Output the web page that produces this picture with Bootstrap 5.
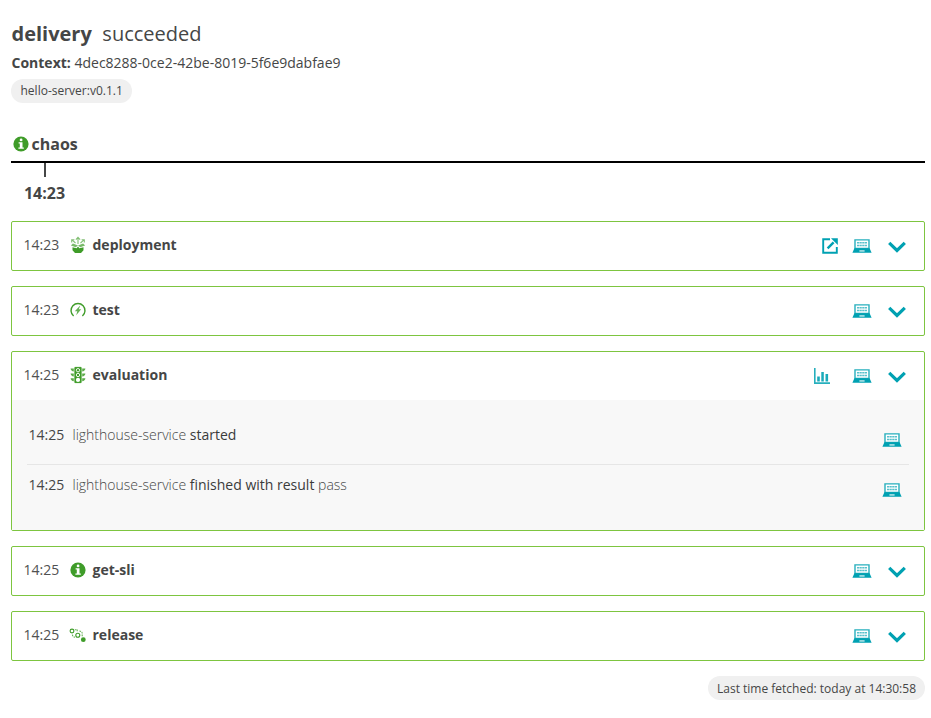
<!DOCTYPE html>
<html lang="en">
<head>
<meta charset="utf-8">
<title>delivery succeeded</title>
<meta name="viewport" content="width=device-width, initial-scale=1">
<link href="https://cdn.jsdelivr.net/npm/bootstrap@5.3.0/dist/css/bootstrap.min.css" rel="stylesheet">
<style>
body{font-family:"Open Sans",sans-serif;font-size:14px;line-height:20px;color:#454646;background:#fff}
.page{padding:20px 6px 0 11px}
.title{font-size:20px;line-height:28px;gap:10.5px;padding-left:.5px}
.context{line-height:20px;margin-top:5px;padding-left:.5px}
.chip{font-size:12px;line-height:24px;height:24px;padding:0 9px;border-radius:12px;background:#f0f0f0}
.chip-service{margin-top:6px;padding:0 9.5px}
.stage{margin-top:30px;height:30px;padding:0 0 0 2px;border-bottom:2px solid #000;font-size:16px;line-height:22px;gap:2.5px}
.stage svg{margin-top:3px}
.mark-time{width:67px;font-size:16px;line-height:22px}
.tick{width:2px;height:14px;background:#454646;margin-bottom:5px}
.tiles{gap:15px;margin-top:17px}
.tile{border:1px solid #7dc540;border-radius:2px}
.tile-head{height:48px;padding:0 18px 2px 11.5px}
.tile-head .clock{width:45.5px;color:#505151}
.tile-head .kind{width:18px;height:18px;margin-right:5.5px}
.actions{color:#00a1b2;padding-top:2px}
.actions .chev{margin-left:16px;margin-top:2px}
.actions .ext{margin-right:14px}
.actions .chart{margin-right:22px}
.tile-body{background:#f8f8f8;height:130px;padding:14px 15px 0}
.event{height:50px;padding:0 7px 8px 1.5px;font-weight:300}
.event .clock{width:44px;font-weight:400}
.event b{font-weight:400;color:#3a3b3b}
.event + .event{border-top:1px solid #e6e6e6;padding-bottom:9px}
.event svg{margin-top:9px;color:#00a1b2}
.green{color:#3f9c29}
.fetched{margin-top:15px;padding-top:1px;line-height:23px}
svg{display:block;flex:none}
</style>
<script src="https://cdn.jsdelivr.net/npm/bootstrap@5.3.0/dist/js/bootstrap.bundle.min.js"></script>
</head>
<body>
<svg class="d-none" aria-hidden="true">
  <symbol id="info" viewBox="0 0 16 16"><circle cx="8" cy="8" r="7.6" fill="currentColor"/><circle cx="8.1" cy="3.9" r="1.4" fill="#fff"/><path d="M5.6 6.3h3.9v5.2h1.3v1.3H5.4v-1.3h1.4V7.6H5.6z" fill="#fff"/></symbol>
  <symbol id="laptop" viewBox="0 0 20 14"><path d="M3 .9h14v8.6H3z" fill="#fff" stroke="currentColor" stroke-width="1.4" stroke-opacity=".85"/><path d="M5 3.7h10M5 6.4h10" stroke="currentColor" stroke-width="1.5" stroke-dasharray="2.2 .4" opacity=".65"/><path d="M2.4 9.3h15.2l2 4.4H.4z" fill="currentColor"/><path d="M7.4 11.4h5.2v1.1H7.4z" fill="#fff"/></symbol>
  <symbol id="chevron" viewBox="0 0 18 12"><path d="M1.2 1.8L9 9.4l7.8-7.6" fill="none" stroke="currentColor" stroke-width="3.2"/></symbol>
  <symbol id="external" viewBox="0 0 16 16"><path d="M8 1.2H1.2v13.6h13.6V9" fill="none" stroke="currentColor" stroke-width="1.9"/><path d="M5.6 10.4l6-6" stroke="currentColor" stroke-width="2.4"/><path d="M9 .2h6.8V7z" fill="currentColor"/></symbol>
  <symbol id="chart" viewBox="0 0 16 16"><path d="M.8 0v15.1H16" fill="none" stroke="currentColor" stroke-width="1.6" opacity=".85"/><path d="M3.2 8.4h2.6v5H3.2zM7.3 4h2.5v9.4H7.3zM11.5 6h2.6v7.4h-2.6z" fill="currentColor" opacity=".9"/></symbol>
  <symbol id="deploy" viewBox="0 0 18 18"><path d="M3.5 11.2l4.1 1.1L9 10.6l1.4 1.7 4.1-1.1v3L12 17H6l-2.5-2.8z" fill="currentColor"/><path d="M1.9 9.6l2-2L9 9.4l5.1-1.8 2 2-4.8 1.7L9 9.4l-2.3 1.9z" fill="currentColor" opacity=".7"/><path d="M9 8V2M6.9 3.6L9 1.4l2.1 2.2M6.5 7L3.3 4.2M2.7 6.4V3.7h2.7M11.5 7l3.2-2.8M15.3 6.4V3.7h-2.7" fill="none" stroke="currentColor" stroke-width="1.1" opacity=".65"/></symbol>
  <symbol id="gauge" viewBox="0 0 18 18"><path d="M4.6 15A7 7 0 1 1 13.4 15" fill="none" stroke="currentColor" stroke-width="1.4"/><path d="M11.4 4.2L5.8 10.2h2.5L7.2 14.2l5-6H9.8z" fill="currentColor" opacity=".8"/></symbol>
  <symbol id="lights" viewBox="0 0 18 18"><path d="M5.9 1.4h6.2v15.2H5.9z" fill="currentColor" stroke="currentColor" stroke-linejoin="round"/><path d="M1.6 2.6h3.2V5.6c-1.9-.2-3-1.3-3.2-3zM16.4 2.6h-3.2V5.6c1.9-.2 3-1.3 3.2-3zM1.6 7.4h3.2v3c-1.9-.2-3-1.3-3.2-3zM16.4 7.4h-3.2v3c1.9-.2 3-1.3 3.2-3zM1.6 12.2h3.2v3c-1.9-.2-3-1.3-3.2-3zM16.4 12.2h-3.2v3c1.9-.2 3-1.3 3.2-3z" fill="currentColor" opacity=".85"/><g fill="none" stroke="#fff" stroke-width=".9"><circle cx="9" cy="4.2" r="1.7"/><circle cx="9" cy="9" r="1.7"/></g><circle cx="9" cy="13.9" r="2.1" fill="#fff"/></symbol>
  <symbol id="route" viewBox="0 0 18 18"><g fill="none" stroke="currentColor" stroke-width="1.1"><circle cx="3" cy="5" r="1.9"/><circle cx="8.8" cy="9.2" r="2"/><path d="M5.8 3.8h1.6M8.2 3.6v2.6M10.4 5q2.6.2 2.8 2.2v3.4M3.4 8.6q.2 2.4 2.6 2.6" stroke-dasharray="1.6 1" opacity=".8"/></g><circle cx="14.3" cy="13.7" r="2.4" fill="currentColor"/></symbol>
</svg>

<main class="page d-flex flex-column">
  <h1 class="title d-flex fw-normal mb-0"><span class="fw-bold">delivery</span><span>succeeded</span></h1>
  <div class="context"><span class="fw-bold">Context:</span> 4dec8288-0ce2-42be-8019-5f6e9dabfae9</div>
  <span class="chip chip-service align-self-start">hello-server:v0.1.1</span>

  <h2 class="stage d-flex fw-bold mb-0"><svg class="green" width="16" height="16"><use href="#info"/></svg>chaos</h2>
  <div class="mark-time d-flex flex-column align-items-center fw-bold"><span class="tick"></span>14:23</div>

  <div class="tiles d-flex flex-column">
    <section class="tile">
      <div class="tile-head d-flex align-items-center">
        <span class="clock">14:23</span><svg class="kind green"><use href="#deploy"/></svg><span class="fw-bold">deployment</span>
        <div class="actions d-flex align-items-center ms-auto"><svg class="ext" width="16" height="16"><use href="#external"/></svg><svg width="20" height="14"><use href="#laptop"/></svg><svg class="chev" width="18" height="12"><use href="#chevron"/></svg></div>
      </div>
    </section>
    <section class="tile">
      <div class="tile-head d-flex align-items-center">
        <span class="clock">14:23</span><svg class="kind green"><use href="#gauge"/></svg><span class="fw-bold">test</span>
        <div class="actions d-flex align-items-center ms-auto"><svg width="20" height="14"><use href="#laptop"/></svg><svg class="chev" width="18" height="12"><use href="#chevron"/></svg></div>
      </div>
    </section>
    <section class="tile">
      <div class="tile-head d-flex align-items-center">
        <span class="clock">14:25</span><svg class="kind green"><use href="#lights"/></svg><span class="fw-bold">evaluation</span>
        <div class="actions d-flex align-items-center ms-auto"><svg class="chart" width="16" height="16"><use href="#chart"/></svg><svg width="20" height="14"><use href="#laptop"/></svg><svg class="chev" width="18" height="12"><use href="#chevron"/></svg></div>
      </div>
      <div class="tile-body">
        <div class="event d-flex align-items-center"><span class="clock">14:25</span><span>lighthouse-service <b>started</b></span><svg class="ms-auto" width="20" height="14"><use href="#laptop"/></svg></div>
        <div class="event d-flex align-items-center"><span class="clock">14:25</span><span>lighthouse-service <b>finished with result</b> pass</span><svg class="ms-auto" width="20" height="14"><use href="#laptop"/></svg></div>
      </div>
    </section>
    <section class="tile">
      <div class="tile-head d-flex align-items-center">
        <span class="clock">14:25</span><svg class="kind green" viewBox="-1 -1 18 18"><use href="#info" width="16" height="16"/></svg><span class="fw-bold">get-sli</span>
        <div class="actions d-flex align-items-center ms-auto"><svg width="20" height="14"><use href="#laptop"/></svg><svg class="chev" width="18" height="12"><use href="#chevron"/></svg></div>
      </div>
    </section>
    <section class="tile">
      <div class="tile-head d-flex align-items-center">
        <span class="clock">14:25</span><svg class="kind green"><use href="#route"/></svg><span class="fw-bold">release</span>
        <div class="actions d-flex align-items-center ms-auto"><svg width="20" height="14"><use href="#laptop"/></svg><svg class="chev" width="18" height="12"><use href="#chevron"/></svg></div>
      </div>
    </section>
  </div>
  <span class="chip fetched align-self-end">Last time fetched: today at 14:30:58</span>
</main>
</body>
</html>
